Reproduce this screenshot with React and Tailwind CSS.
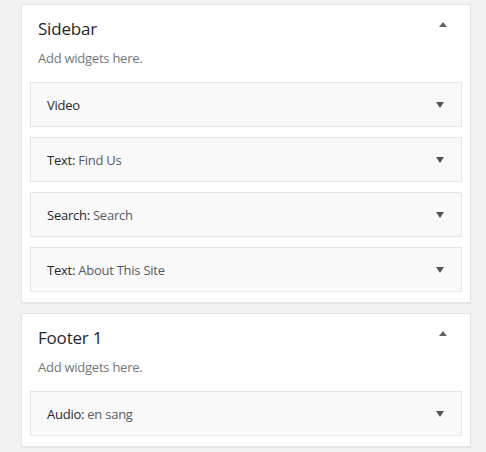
import React from 'react'

const sidebars = [
    {
        name: 'Sidebar',
        widgets: [
            { title: 'Video', instance: '' },
            { title: 'Text', instance: 'Find Us' },
            { title: 'Search', instance: 'Search' },
            { title: 'Text', instance: 'About This Site' },
        ],
    },
    {
        name: 'Footer 1',
        widgets: [{ title: 'Audio', instance: 'en sang' }],
    },
]

function ArrowUp() {
    return (
        <svg width="8" height="5" viewBox="0 0 8 5" className="block">
            <polygon points="4,0 8,5 0,5" fill="#5e6369" />
        </svg>
    )
}

function ArrowDown() {
    return (
        <svg width="8" height="6" viewBox="0 0 8 6" className="block">
            <polygon points="0,0 8,0 4,6" fill="#50555a" />
        </svg>
    )
}

function WidgetRow({ widget }) {
    return (
        <div className="flex h-[45px] items-center justify-between border border-[#e5e5e5] bg-[#f9f9f9] pl-4 pr-[17px]">
            <div className="text-[13px] leading-5 tracking-[-0.25px]">
                <span className="font-medium text-[#23282d]">{widget.title}{widget.instance && ':'}</span>
                {widget.instance && <span className="text-[#555d66]"> {widget.instance}</span>}
            </div>
            <ArrowDown />
        </div>
    )
}

function SidebarPanel({ sidebar }) {
    return (
        <div className="border border-[#e5e5e5] bg-white px-2 pb-[10px] shadow-[0_1px_1px_rgba(0,0,0,0.04)]">
            <div className="flex items-start justify-between pt-[11px] pl-2 pr-[15px]">
                <h2 className="text-[17px] leading-[26px] font-medium tracking-[-0.2px] text-[#23282d]">{sidebar.name}</h2>
                <div className="pt-[6px]">
                    <ArrowUp />
                </div>
            </div>
            <p className="mt-[6px] pl-2 text-[13px] leading-5 tracking-[-0.25px] text-[#72777c]">Add widgets here.</p>
            <div className="mt-[14px] flex flex-col gap-[10px]">
                {sidebar.widgets.map((w, i) => (
                    <WidgetRow key={i} widget={w} />
                ))}
            </div>
        </div>
    )
}

export default function App() {
    return (
        <div className="min-h-[452px] bg-[#f1f1f1] pt-1 pl-[21px] pr-[15px] font-['Open_Sans',sans-serif]">
            <div className="flex flex-col gap-[10px]">
                {sidebars.map((s) => (
                    <SidebarPanel key={s.name} sidebar={s} />
                ))}
            </div>
        </div>
    )
}
